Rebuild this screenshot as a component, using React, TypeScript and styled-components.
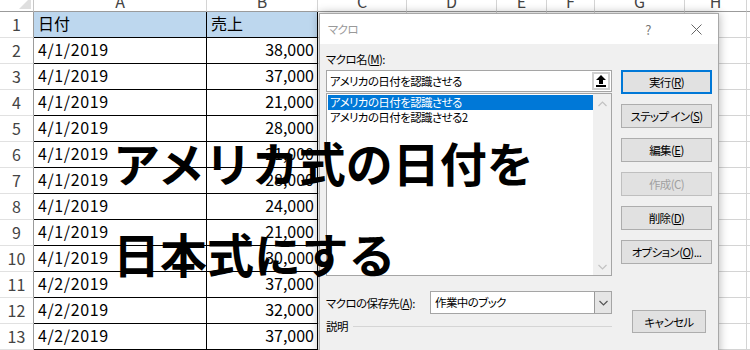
import React from "react";
import styled, { createGlobalStyle } from "styled-components";

const GlobalStyle = createGlobalStyle`
  html, body {
    margin: 0;
    padding: 0;
    background: #ffffff;
    overflow: hidden;
  }
  body {
    font-family: "Noto Sans CJK JP", "Noto Sans", sans-serif;
  }
`;

const Page = styled.div`
  position: relative;
  width: 750px;
  height: 350px;
  overflow: hidden;
`;

// ---------- spreadsheet ----------

const Sheet = styled.div`
  display: grid;
  grid-template-columns: 34px 173px 111px 89px 90px 50px 48px 90px 62px 1fr;
  grid-template-rows: 20px repeat(14, 26px);
  margin-top: -8px;
  font-family: "Noto Sans CJK JP", sans-serif;
  font-size: 16px;
`;

const Corner = styled.div`
  position: relative;
  border-right: 1px solid #c6c6c6;
  border-bottom: 1px solid #9b9b9b;
  box-sizing: border-box;

  &::after {
    content: "";
    position: absolute;
    right: 2px;
    bottom: 2px;
    border-style: solid;
    border-width: 0 0 12px 12px;
    border-color: transparent transparent #dfdfdf transparent;
  }
`;

const ColHead = styled.div<{ $last?: boolean }>`
  box-sizing: border-box;
  border-right: ${(p) => (p.$last ? "none" : "1px solid #d4d4d4")};
  border-bottom: 1px solid #9b9b9b;
  color: #444;
  text-align: center;
  line-height: 18px;
`;

const RowHead = styled.div`
  box-sizing: border-box;
  border-right: 1px solid #9b9b9b;
  border-bottom: 1px solid #e1e1e1;
  color: #444;
  text-align: center;
  line-height: 24px;
`;

const Cell = styled.div<{ $table?: boolean; $head?: boolean; $num?: boolean; $last?: boolean }>`
  box-sizing: border-box;
  border-right: ${(p) => (p.$last ? "none" : p.$table ? "1px solid #000" : "1px solid #d4d4d4")};
  border-bottom: ${(p) => (p.$table ? "1px solid #000" : "1px solid #d4d4d4")};
  background: ${(p) => (p.$head ? "#bdd7ee" : "transparent")};
  color: #000;
  text-align: ${(p) => (p.$num ? "right" : "left")};
  letter-spacing: ${(p) => (p.$num || p.$head ? "0" : "0.6px")};
  padding: 0 3px 0 4px;
  line-height: 23px;
  white-space: nowrap;
  overflow: hidden;
`;

const cols = ["A", "B", "C", "D", "E", "F", "G", "H", ""];

const rows: [string, string][] = [
  ["日付", "売上"],
  ["4/1/2019", "38,000"],
  ["4/1/2019", "37,000"],
  ["4/1/2019", "21,000"],
  ["4/1/2019", "28,000"],
  ["4/1/2019", "21,000"],
  ["4/1/2019", "28,000"],
  ["4/1/2019", "24,000"],
  ["4/1/2019", "21,000"],
  ["4/1/2019", "30,000"],
  ["4/2/2019", "37,000"],
  ["4/2/2019", "32,000"],
  ["4/2/2019", "37,000"],
  ["", ""],
];

// ---------- dialog ----------

const Dialog = styled.div`
  position: absolute;
  left: 319px;
  top: 13px;
  width: 400px;
  height: 360px;
  box-sizing: border-box;
  background: #f0f0f0;
  border: 1px solid #a8a8a8;
  box-shadow: 0 0 9px rgba(0, 0, 0, 0.3);
  font-family: "Noto Sans CJK JP", sans-serif;
  font-feature-settings: "palt";
  font-size: 11.5px;
  letter-spacing: -0.6px;
  color: #000;
`;

const TitleBar = styled.div`
  display: flex;
  align-items: center;
  height: 30px;
  background: #ffffff;
  padding-left: 8px;
  color: #999;
`;

const TitleText = styled.div`
  flex: 1;
`;

const TitleButtons = styled.div`
  display: flex;
  align-items: center;
  color: #777;
  font-size: 13px;
`;

const HelpMark = styled.span`
  width: 14px;
  text-align: center;
  margin-right: 36px;
`;

const CloseMark = styled.span`
  display: flex;
  width: 11px;
  margin-right: 16px;
`;

const Body = styled.div`
  display: grid;
  grid-template-columns: 286px 91px;
  column-gap: 9px;
  padding: 7px 0 0 6px;
`;

const LeftCol = styled.div`
  display: flex;
  flex-direction: column;
`;

const Label = styled.div`
  line-height: 16px;
  height: 16px;
  white-space: nowrap;
`;

const NameInput = styled.div`
  display: flex;
  align-items: center;
  height: 22px;
  margin-top: 3px;
  box-sizing: border-box;
  background: #fff;
  border: 1px solid #a5a5a5;
  padding-left: 3px;
`;

const InputText = styled.div`
  flex: 1;
`;

const ArrowBox = styled.div`
  display: flex;
  align-items: center;
  justify-content: center;
  width: 18px;
  height: 18px;
  margin-right: 1px;
  box-sizing: border-box;
  border: 2px solid #cfcfcf;
  background: #fff;
`;

const ListBox = styled.div`
  display: grid;
  grid-template-columns: 1fr 18px;
  height: 183px;
  margin-top: 1px;
  box-sizing: border-box;
  background: #fff;
  border: 1px solid #a5a5a5;
`;

const Items = styled.div`
  padding: 1px 0 0 1px;
`;

const Item = styled.div<{ $selected?: boolean }>`
  height: 15px;
  line-height: 15px;
  padding-left: 2px;
  background: ${(p) => (p.$selected ? "#0078d7" : "transparent")};
  color: ${(p) => (p.$selected ? "#fff" : "#000")};
`;

const ScrollBar = styled.div`
  display: flex;
  flex-direction: column;
  justify-content: space-between;
  align-items: center;
  background: #f0f0f0;
  padding: 7px 0 5px;
`;

const StoreRow = styled.div`
  display: flex;
  align-items: center;
  margin-top: 15px;
`;

const StoreLabel = styled(Label)`
  width: 104px;
`;

const Combo = styled.div`
  display: flex;
  flex: 1;
  height: 23px;
  box-sizing: border-box;
  background: #fff;
  border: 1px solid #a5a5a5;
`;

const ComboText = styled.div`
  flex: 1;
  line-height: 21px;
  padding-left: 4px;
`;

const DropButton = styled.div`
  display: flex;
  align-items: center;
  justify-content: center;
  width: 17px;
  box-sizing: border-box;
  background: #e5e5e5;
  border-left: 1px solid #999;
`;

const DescRow = styled.div`
  display: flex;
  align-items: center;
  margin-top: 4px;
`;

const DescLine = styled.div`
  flex: 1;
  height: 1px;
  margin-left: 5px;
  background: #d5d5d5;
`;

const RightCol = styled.div`
  display: flex;
  flex-direction: column;
  gap: 10px;
  padding-top: 19px;
`;

const Button = styled.div<{ $primary?: boolean; $disabled?: boolean }>`
  display: flex;
  align-items: center;
  justify-content: center;
  height: 24px;
  box-sizing: border-box;
  background: #e1e1e1;
  border: ${(p) => (p.$primary ? "2px solid #0078d7" : p.$disabled ? "1px solid #bfbfbf" : "1px solid #adadad")};
  color: ${(p) => (p.$disabled ? "#a0a0a0" : "#000")};
  white-space: nowrap;
`;

const CancelButton = styled(Button)`
  width: 74px;
  height: 23px;
  margin: 36px 0 0 11px;
`;

// ---------- overlay ----------

const Headline = styled.div`
  position: absolute;
  left: 113px;
  top: 116px;
  font-family: "Noto Sans CJK JP", sans-serif;
  font-weight: 700;
  font-size: 47px;
  line-height: 91px;
  color: #000;
  white-space: nowrap;
`;

const UpArrow = () => (
  <svg width="10" height="12" viewBox="0 0 10 12">
    <path d="M5 0 L10 5 L7 5 L7 9 L3 9 L3 5 L0 5 Z" fill="#000" />
    <rect x="0" y="10" width="10" height="2" fill="#000" />
  </svg>
);

const Chevron = ({ up, color }: { up?: boolean; color: string }) => (
  <svg width="9" height="6" viewBox="0 0 9 6">
    <path
      d={up ? "M0.5 5 L4.5 1 L8.5 5" : "M0.5 1 L4.5 5 L8.5 1"}
      fill="none"
      stroke={color}
      strokeWidth="1.2"
    />
  </svg>
);

const App = () => {
  return (
    <Page>
      <GlobalStyle />
      <Sheet>
        <Corner />
        {cols.map((c, i) => (
          <ColHead key={i} $last={i === cols.length - 1}>
            {c}
          </ColHead>
        ))}
        {rows.map(([a, b], r) => (
          <React.Fragment key={r}>
            <RowHead>{r + 1}</RowHead>
            <Cell $table={r < 13} $head={r === 0}>
              {a}
            </Cell>
            <Cell $table={r < 13} $head={r === 0} $num={r > 0}>
              {b}
            </Cell>
            {cols.slice(2).map((_, i) => (
              <Cell key={i} $last={i === cols.length - 3} />
            ))}
          </React.Fragment>
        ))}
      </Sheet>

      <Dialog>
        <TitleBar>
          <TitleText>マクロ</TitleText>
          <TitleButtons>
            <HelpMark>?</HelpMark>
            <CloseMark>
              <svg width="11" height="11" viewBox="0 0 11 11">
                <path d="M0.5 0.5 L10.5 10.5 M10.5 0.5 L0.5 10.5" stroke="#666" strokeWidth="1" />
              </svg>
            </CloseMark>
          </TitleButtons>
        </TitleBar>
        <Body>
          <LeftCol>
            <Label>
              マクロ名(<u>M</u>):
            </Label>
            <NameInput>
              <InputText>アメリカの日付を認識させる</InputText>
              <ArrowBox>
                <UpArrow />
              </ArrowBox>
            </NameInput>
            <ListBox>
              <Items>
                <Item $selected>アメリカの日付を認識させる</Item>
                <Item>アメリカの日付を認識させる2</Item>
              </Items>
              <ScrollBar>
                <Chevron up color="#c2c2c2" />
                <Chevron color="#c2c2c2" />
              </ScrollBar>
            </ListBox>
            <StoreRow>
              <StoreLabel>
                マクロの保存先(<u>A</u>):
              </StoreLabel>
              <Combo>
                <ComboText>作業中のブック</ComboText>
                <DropButton>
                  <Chevron color="#555" />
                </DropButton>
              </Combo>
            </StoreRow>
            <DescRow>
              <Label>説明</Label>
              <DescLine />
            </DescRow>
          </LeftCol>
          <RightCol>
            <Button $primary>
              実行(<u>R</u>)
            </Button>
            <Button>
              ステップ イン(<u>S</u>)
            </Button>
            <Button>
              編集(<u>E</u>)
            </Button>
            <Button $disabled>作成(C)</Button>
            <Button>
              削除(<u>D</u>)
            </Button>
            <Button>
              オプション(<u>O</u>)...
            </Button>
            <CancelButton>キャンセル</CancelButton>
          </RightCol>
        </Body>
      </Dialog>

      <Headline>
        アメリカ式の日付を
        <br />
        日本式にする
      </Headline>
    </Page>
  );
};

export default App;
